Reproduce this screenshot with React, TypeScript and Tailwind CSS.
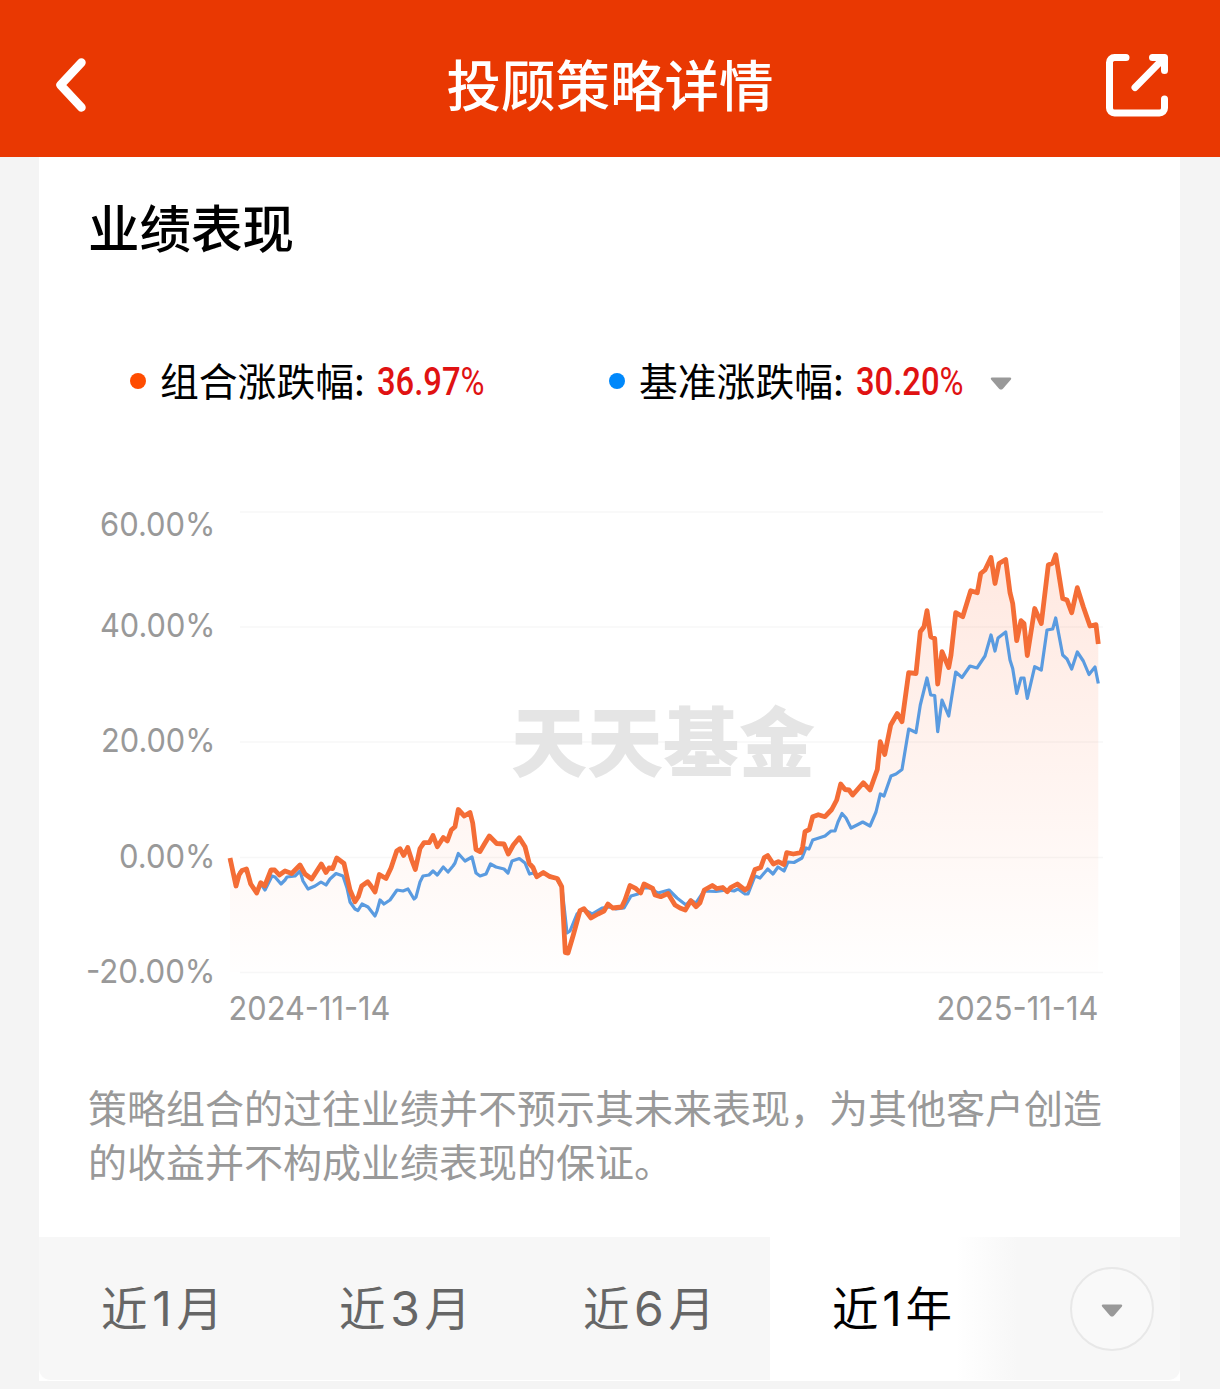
import React from 'react';

const CJK = "font-['Noto_Sans_CJK_SC',sans-serif]";

// Points are x,y pairs in the chart's own coordinate space
const portfolio =
  '230,858 236,886 239,875 242,870.5 246.5,869 250.7,884 256.7,893 260.7,882.7 264.7,886 271,870 274.7,870 279.3,875 285,871 291.7,873.5 300,865 305,874 311.7,879 321.3,864 326,872.5 329,868 332.7,868.5 336.7,858 344,863.5 350,890 355,901.7 358.3,896.7 361.7,886 367.7,881.7 371,886 375,892 379.3,874.5 386,878.5 391,868 396.7,851 400,848.7 403.7,855.5 407.7,847.5 411.7,860 415.3,869.5 420,848.5 424,842.7 429.3,842.7 433,835.5 437.3,846.7 443.3,837.5 447.3,841 451.3,830 455,826.7 458.3,809.5 464.3,816 470,812.5 472.7,823 476,849.5 480,851.5 485,843 489.3,836 496.7,843.5 504,844 508.3,854 513.3,845 519.3,837.7 525,846.7 529.3,863.5 533,867.5 536.7,876.7 543.3,872.5 550,876.7 557.3,878.5 561.7,886.7 565.3,952.7 568,953 573.3,935 580,910.7 584,908.7 591,918 598,914 604,911 608,904 612.7,908 621.7,907 625,900 630,885.5 636,888.7 640.7,893 644,884 652.7,888.5 655,895 660.7,896.7 668,893.5 675,905 680,908 685.3,910 690.7,900.7 696,906.7 700,902.7 704.3,890 712.3,885.5 716.7,888.5 722.7,887.5 727.3,891.7 730.7,887.5 737.3,884 745,890 748.3,887.5 755,869.5 760.7,867.5 764.3,857.5 767.7,855.5 773.3,864 778.3,861.7 784,864.5 786.7,852.7 793.3,854 800.7,852.7 802.7,846.7 805,831.7 809.3,829.5 812.7,816.7 818.3,814.7 825,816.7 831.7,809.5 836.7,800 840.7,784 845,789.5 849,790 852.7,795 863.3,782.7 870,790 877.3,769.5 880.3,741.7 884.7,754.5 890.7,725 897.3,713.5 902,721.7 908.7,672.7 916,673.5 920.3,631.7 924,626.7 927,610.7 930.7,636.7 934.7,638.5 937.7,684 942,651.7 948.7,667.5 951,655 955.7,612.7 962.7,616.7 970.7,590.7 977.3,592.7 980.7,573.5 985,570 991,557.5 995,583.5 999,563.5 1005.7,559.5 1010,592.7 1012.7,603.5 1016.7,640.7 1021,620.7 1024,623.5 1027.3,655.5 1034.7,608.5 1041.3,623.5 1048.3,565 1052.7,563 1055.7,554.7 1062.7,598.5 1067,600 1071.7,612.7 1077.3,587.7 1083.3,606.7 1090,626 1096,624.7 1098.3,644';

const benchmark =
  '230,860 236,883 240,872 246,869 250.7,884 256.7,892 261,884 265,890 272,876 275,877 281,884 285,880 287,877 295,876 300,871 303,881 308,889 315,886 321,882 326,885 330,879 336,873.5 343,876 347,888 350,902 355,909 358,910.5 362,904 368,907 375,916 377,911 380,900 384,904 390,900 397,890 403,891 408,889 414,899 416,897 420,882 423,876 429,875 433,871 437.3,875 443.3,867 448,872 453,866 455,863 458.3,853.5 465,861 472,857 476,873 480,876 486,874 490.5,864 496,867 504,869 508,873 512,861 519.3,858.5 525,863 529.5,874 533,873 536.7,876 543,873 557,879 562,888 567,933 570,931 577,914 583,909 592,914 602,908 610,907 616,909 624,908 631,896 638,894 643,888 650,888 658,893 669,890 677,898 686,905 691,900 696,903 704,891 716,891.5 727,890 734,891 738,889 745,894 748,894 755,876 760,878 767.7,869 773,874 778,867 784,871 788,862 794,862.5 802,858 806,848 809,849 812.7,840 825,836 831,831 835,831 838,822 842,813.5 846,818 851,828 857,825 862.7,822 870,826 876,812 880.3,794 884,796 891,776 896,774 902,769.5 908.7,729 916,732.5 920.3,705 927,678 930.7,695 934.7,695.5 937.7,731.7 942,700 948.7,716 955.7,672 962,677.5 970,666 977,668 985,656 991,635 995,651 998,638 1005.7,632 1010,660 1012.7,668.5 1016.7,693.5 1021,678 1024,678 1027.3,698.5 1034.7,666.7 1041.3,670 1047,630 1052.7,629 1055.7,618 1062.7,655 1067,659 1071.7,669 1077.3,652 1083.3,661 1089,674.5 1095,667 1098.3,683.5';

const axis = [
  { label: '60.00%', y: 536, grid: 512, x: 100 },
  { label: '40.00%', y: 637, grid: 627, x: 100 },
  { label: '20.00%', y: 752, grid: 742, x: 101 },
  { label: '0.00%', y: 868, grid: 857.5, x: 119 },
  { label: '-20.00%', y: 983, grid: 972.5, x: 86 },
];

const PerformanceChart: React.FC = () => (
  <svg className="block h-[550px] w-full" viewBox="39 490 1141 550" fontFamily="Inter, sans-serif" fontSize="33" fill="#999">
    <defs>
      <linearGradient id="area" x1="0" y1="550" x2="0" y2="972" gradientUnits="userSpaceOnUse">
        <stop offset="0" stopColor="#ff5b22" stopOpacity="0.14" />
        <stop offset="1" stopColor="#ff5b22" stopOpacity="0.005" />
      </linearGradient>
    </defs>
    {axis.map((a) => (
      <line key={a.grid} x1="240" x2="1103" y1={a.grid} y2={a.grid} stroke="#f7f7f7" strokeWidth="1.5" />
    ))}
    <text x="511" y="771" fontFamily="'Noto Sans CJK SC', sans-serif" fontSize="76" fontWeight="900" fill="#e5e5e5" textLength="304">
      天天基金
    </text>
    <polygon points={`${portfolio} 1098.3,972 230,972`} fill="url(#area)" />
    <polyline points={benchmark} fill="none" stroke="#5a9be0" strokeWidth="3.2" strokeLinejoin="round" />
    <polyline points={portfolio} fill="none" stroke="#f46d36" strokeWidth="4.8" strokeLinejoin="round" />
    {axis.map((a) => (
      <text key={a.label} x={a.x} y={a.y} textLength={215.5 - a.x} lengthAdjust="spacingAndGlyphs">
        {a.label}
      </text>
    ))}
    <text x="228.5" y="1020" textLength="162" lengthAdjust="spacingAndGlyphs">2024-11-14</text>
    <text x="936.5" y="1020" textLength="162" lengthAdjust="spacingAndGlyphs">2025-11-14</text>
  </svg>
);

const Caret: React.FC = () => (
  <svg className="h-[14px] w-[22px] shrink-0" viewBox="0 0 22 14" fill="#999">
    <path d="M2 0.5h18q2 0.5 .7 2.2l-7.8 9q-1.9 1.8-3.8 0l-7.8-9Q0 1 2 .5Z" />
  </svg>
);

const LegendItem: React.FC<{ dot: string; name: string; value: string }> = ({ dot, name, value }) => (
  <div className="flex h-[56px] items-center">
    <span className={`size-4 rounded-full ${dot}`} />
    <span className="ml-[14px] w-[217px] pb-[3px] text-[38.800px] whitespace-nowrap text-black">{name}:</span>
    <span className="w-[108px] origin-left scale-x-[0.84] pt-[3px] font-[Roboto] text-[39px] font-medium whitespace-nowrap text-[#e01212]">
      {value}
      <span className="font-normal">%</span>
    </span>
  </div>
);

const tabs = [
  { n: '1', unit: '月', cell: 'w-[243px] pl-[62px]', num: 'w-[29px]' },
  { n: '3', unit: '月', cell: 'w-[244px] pl-[57px]', num: 'w-[39px]' },
  { n: '6', unit: '月', cell: 'w-[244px] pl-[57px]', num: 'w-[39px]' },
];

export default function App() {
  return (
    <div className={`h-[1389px] w-[1220px] overflow-hidden bg-[#f4f4f4] ${CJK}`}>
      <header className="flex h-[157px] items-center justify-between bg-[#e93802] pt-[12px] pr-[51px] pl-[54px] text-white">
        <svg className="h-[60px] w-[64px]" viewBox="0 0 64 60" fill="none" stroke="currentColor" strokeWidth="8.5" strokeLinecap="round" strokeLinejoin="round">
          <path d="M27.500 7.500 6.500 30l21 22.500" />
        </svg>
        <h1 className="pr-[3px] pb-[3px] text-[54.5px] leading-none font-medium">投顾策略详情</h1>
        <svg className="h-[64px] w-[64px]" viewBox="0 0 64 64" fill="none" stroke="currentColor" strokeWidth="7" strokeLinecap="round" strokeLinejoin="round">
          <path d="M21 4.5H9.5a5 5 0 0 0-5 5v45.500a5 5 0 0 0 5 5h45a5 5 0 0 0 5-5V46M47.500 4.500h12v13M59 5 30 34.500" />
        </svg>
      </header>

      <main className="ml-[39px] w-[1141px] bg-white">
        <h2 className="h-[176px] pt-[42px] pl-[49px] text-[51.500px] leading-[54px] font-medium text-black">业绩表现</h2>

        <div className="flex h-[157px] items-start pt-[20px] pl-[91px]">
          <LegendItem dot="bg-[#ff4c00]" name="组合涨跌幅" value="36.97" />
          <div className="ml-[124px] flex items-center">
            <LegendItem dot="bg-[#0088fb]" name="基准涨跌幅" value="30.20" />
            <div className="ml-[26px] flex pt-[5px]">
              <Caret />
            </div>
          </div>
        </div>

        <PerformanceChart />

        <p className="h-[197px] pt-[39px] pl-[49px] text-[39px] leading-[54px] whitespace-nowrap text-[#999]">
          策略组合的过往业绩并不预示其未来表现，为其他客户创造
          <br />
          的收益并不构成业绩表现的保证。
        </p>

        <nav className="flex h-[144px] items-center overflow-hidden rounded-b-xl border-b border-white bg-[#f7f7f7] text-[46.500px] leading-none text-[#666]">
          {tabs.map((t) => (
            <button key={t.n} className={`flex shrink-0 items-center pb-[5px] ${t.cell}`}>
              <span>近</span>
              <span className={`pt-[5px] text-center font-[Inter] text-[48px] ${t.num}`}>{t.n}</span>
              <span>{t.unit}</span>
            </button>
          ))}
          <button className="flex h-full w-[248px] shrink-0 items-center bg-linear-to-r from-white from-75% to-[#f7f7f7] pb-[5px] pl-[62px] text-black">
            <span>近</span>
            <span className="w-[27px] pt-[5px] text-center font-[Inter] text-[48px]">1</span>
            <span>年</span>
          </button>
          <button className="ml-[52px] flex size-[84px] items-center justify-center rounded-full border-2 border-[#e8e8e8] bg-[#f9f9f9] pt-1">
            <Caret />
          </button>
        </nav>
      </main>
    </div>
  );
}
